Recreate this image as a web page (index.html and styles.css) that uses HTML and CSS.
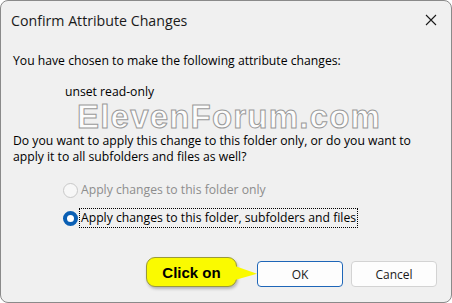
FILE: index.html
```html
<!DOCTYPE html>
<html>
<head>
<meta charset="utf-8">
<link rel="stylesheet" href="styles.css">
</head>
<body>
<div class="window">
  <div class="titlebar">
    <span class="title">Confirm Attribute Changes</span>
    <svg class="close" width="12" height="12" viewBox="0 0 12 12"><path d="M1 1 L11 11 M11 1 L1 11" stroke="#1a1a1a" stroke-width="1.1" fill="none"/></svg>
  </div>
  <div class="content">
    <p class="intro">You have chosen to make the following attribute changes:</p>
    <p class="change">unset read-only</p>
    <div class="watermark">ElevenForum.com</div>
    <p class="question">Do you want to apply this change to this folder only, or do you want to apply it to all subfolders and files as well?</p>
    <div class="options">
      <label class="option disabled"><span class="radio"></span><span class="label">Apply changes to this folder only</span></label>
      <label class="option checked"><span class="radio"></span><span class="label focus">Apply changes to this folder, subfolders and files</span></label>
    </div>
  </div>
  <div class="footer">
    <div class="callout">Click on</div>
    <button class="btn primary">OK</button>
    <button class="btn">Cancel</button>
  </div>
</div>
</body>
</html>
```
FILE: styles.css
```css
html, body { margin: 0; padding: 0; background: #ffffff; }
body { width: 452px; height: 303px; overflow: hidden; font-family: "Open Sans", "Noto Sans", sans-serif; color: #000; }
.window {
  box-sizing: border-box;
  width: 452px; height: 303px;
  border: 1px solid #8a8a8a;
  border-radius: 8px;
  background: #f0f0f0;
  display: flex; flex-direction: column;
  overflow: hidden;
}
.titlebar {
  height: 38px;
  display: flex; align-items: center; justify-content: space-between;
  padding: 0 14px 0 10px;
}
.title { font-size: 14.2px; color: #1a1a1a; }
.close { display: block; }
.content { padding: 14px 30px 0 12px; font-size: 12.2px; }
.content p { margin: 0; line-height: 16px; }
.change { margin-top: 15px !important; padding-left: 52px; }
.watermark {
  height: 32px;
  margin-top: 1px;
  padding-left: 64px;
  font-family: "Liberation Sans", Arial, sans-serif;
  font-weight: bold;
  font-size: 33px; line-height: 32px;
  color: #fcfcfc;
  -webkit-text-stroke: 1px #9a9a9a;
  letter-spacing: 1.2px;
  white-space: nowrap;
}
.options { padding-left: 50px; margin-top: 16px; display: flex; flex-direction: column; gap: 10px; }
.option { display: flex; align-items: center; gap: 2px; }
.radio {
  box-sizing: border-box; width: 15px; height: 15px; border-radius: 50%;
  border: 1px solid #c8c8c8; background: #f7f7f7;
}
.disabled .label { color: #8d8d8d; }
.checked .radio { border: 4px solid #0a5fb4; background: #fff; }
.label { padding: 1px 1px; line-height: 16px; }
.focus { outline: 1px dotted #000; }
.footer {
  margin-top: auto;
  height: 41px;
  display: flex; align-items: flex-start; justify-content: flex-end;
  padding: 0 14px 0 0;
  gap: 8px;
}
.btn {
  width: 86px; height: 26px;
  box-sizing: border-box;
  border: 1px solid #d3d3d3;
  border-radius: 4px;
  background: #fdfdfd;
  font-family: "Open Sans", "Noto Sans", sans-serif;
  font-size: 12px; color: #1a1a1a;
  padding: 0;
}
.btn.primary { border-color: #1e66b8; }
.callout {
  position: relative;
  width: 91px; height: 30px; margin-top: -4px; margin-right: 12px;
  box-sizing: border-box;
  background: #fafa00;
  border: 1px solid #9a9a3a;
  border-radius: 9px;
  font-family: "Liberation Sans", Arial, sans-serif;
  font-weight: bold; font-size: 15px;
  display: flex; align-items: center; justify-content: center;
  box-shadow: 1px 2px 3px rgba(0,0,0,0.25);
}
.callout::after {
  content: ""; position: absolute; right: -21px; top: 8px;
  width: 22px; height: 14px;
  background: #fafa00;
  clip-path: polygon(0 0, 100% 55%, 0 100%);
}
```
